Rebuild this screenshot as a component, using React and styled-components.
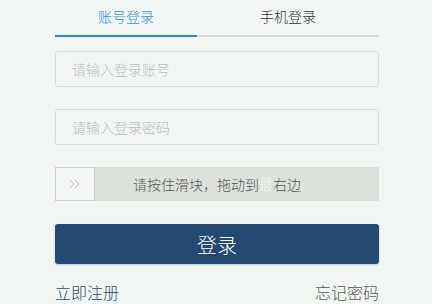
import React from 'react';
import styled, { createGlobalStyle } from 'styled-components';

const Global = createGlobalStyle`
  html, body {
    margin: 0;
    padding: 0;
    background: #f1f6f2;
    font-family: "Noto Sans CJK SC", "Liberation Sans", sans-serif;
    font-weight: 300;
  }
`;

const Wrap = styled.div`
  width: 324px;
  margin: 0 0 0 55px;
  display: flex;
  flex-direction: column;
`;

const Tabs = styled.div`
  display: flex;
  height: 37px;
`;

const Tab = styled.div`
  flex: ${p => (p.$active ? '0 0 142px' : '1')};
  display: flex;
  align-items: center;
  justify-content: center;
  font-size: 14px;
  padding-bottom: 3px;
  box-sizing: border-box;
  color: ${p => (p.$active ? '#3d8fd6' : '#333')};
  border-bottom: 2px solid ${p => (p.$active ? '#3a85c4' : '#d6dcdd')};
`;

const Field = styled.div`
  height: 36px;
  margin-top: ${p => p.$top}px;
  border: 1px solid #d9dedb;
  border-radius: 3px;
  box-sizing: border-box;
  display: flex;
  align-items: center;
  padding-left: 16px;
  font-size: 14px;
  color: #babebc;
  background: #f2f6f3;
`;

const Slider = styled.div`
  height: 34px;
  margin-top: 22px;
  position: relative;
  display: flex;
  align-items: center;
  justify-content: center;
  background: #dde1dc;
  font-size: 14px;
  color: #555;
`;

const Handle = styled.div`
  position: absolute;
  left: 0;
  top: 0;
  width: 40px;
  height: 34px;
  box-sizing: border-box;
  border: 1px solid #c9cec9;
  background: #f3f6f3;
  display: flex;
  align-items: center;
  justify-content: center;
  color: #bcc0bd;
`;

const Shine = styled.span`
  color: #f4f6f4;
`;

const LoginButton = styled.button`
  height: 40px;
  margin-top: 23px;
  border: 0;
  border-radius: 3px;
  background: #244a72;
  color: #fff;
  font-size: 20px;
  font-family: inherit;
  font-weight: 300;
  box-shadow: 0 1px 2px rgba(120, 170, 220, 0.5);
`;

const Links = styled.div`
  display: flex;
  justify-content: space-between;
  margin-top: 18px;
  font-size: 16px;
  line-height: 20px;
`;

const Link = styled.span`
  color: ${p => (p.$primary ? '#2c4b6f' : '#555')};
`;

const Chevrons = () => (
  <svg width="12" height="10" viewBox="0 0 12 10" fill="none" stroke="currentColor" strokeWidth="1">
    <path d="M1 1l4 4-4 4M6 1l4 4-4 4" />
  </svg>
);

export default function App() {
  return (
    <>
      <Global />
      <Wrap>
        <Tabs>
          <Tab $active>账号登录</Tab>
          <Tab>手机登录</Tab>
        </Tabs>
        <Field $top={14}>请输入登录账号</Field>
        <Field $top={22}>请输入登录密码</Field>
        <Slider>
          <Handle>
            <Chevrons />
          </Handle>
          请按住滑块，拖动到<Shine>最</Shine>右边
        </Slider>
        <LoginButton>登录</LoginButton>
        <Links>
          <Link $primary>立即注册</Link>
          <Link>忘记密码</Link>
        </Links>
      </Wrap>
    </>
  );
}
